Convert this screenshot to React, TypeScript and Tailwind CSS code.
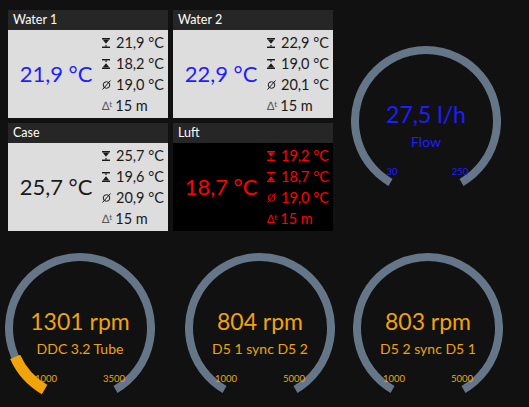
import React from 'react'

const font = { fontFamily: 'Lato, "Noto Sans", sans-serif' }

// kleine Icons für min / max / avg
function Hourglass({ up, color }: { up?: boolean; color: string }) {
  return (
    <svg width="8" height="10" viewBox="0 0 8 10">
      <rect x="0" y="0" width="8" height="1.4" fill={color} />
      <rect x="0" y="8.6" width="8" height="1.4" fill={color} />
      {up ? (
        <>
          <polygon points="2.6,1.4 5.4,1.4 4,3.2" fill={color} />
          <polygon points="0.6,8.6 7.4,8.6 4,4.2" fill={color} />
        </>
      ) : (
        <>
          <polygon points="0.6,1.4 7.4,1.4 4,5.8" fill={color} />
          <polygon points="2.6,8.6 5.4,8.6 4,6.8" fill={color} />
        </>
      )}
    </svg>
  )
}

function Avg({ color }: { color: string }) {
  return (
    <svg width="9" height="10" viewBox="0 0 9 10">
      <circle cx="4.5" cy="5" r="3.3" fill="none" stroke={color} strokeWidth="1" />
      <line x1="0.5" y1="9.5" x2="8.5" y2="0.5" stroke={color} strokeWidth="1" />
    </svg>
  )
}

type TileProps = {
  title: string
  value: string
  max: string
  min: string
  avg: string
  dark?: boolean
  valueClass: string
}

function Tile({ title, value, max, min, avg, dark, valueClass }: TileProps) {
  const c = dark ? '#ff0000' : '#1a1a1a'
  const rowText = dark ? 'text-[#ff0000]' : 'text-[#1a1a1a]'
  return (
    <div className="flex h-[108px] w-[160px] flex-col">
      <div className="flex h-[20px] items-center bg-[#262626] px-[5px] text-[12.5px] text-white">{title}</div>
      <div className={`flex flex-1 ${dark ? 'bg-black' : 'bg-[#dddddd]'}`}>
        <div className={`flex flex-1 items-center justify-center pb-[2px] pl-[2px] text-[22px] ${valueClass}`}>{value}</div>
        <div className={`flex w-[66px] flex-col pt-[2px] text-[14.5px] ${rowText}`}>
          <div className="flex h-[21px] items-center gap-[6px]">
            <Hourglass color={c} />
            <span>{max}</span>
          </div>
          <div className="flex h-[21px] items-center gap-[6px]">
            <Hourglass up color={c} />
            <span>{min}</span>
          </div>
          <div className="flex h-[21px] items-center gap-[5px]">
            <Avg color={c} />
            <span>{avg}</span>
          </div>
          <div className="flex h-[21px] items-center gap-[3px]">
            <span className={`flex items-start leading-none ${dark ? 'text-[#ff0000]' : 'text-[#555]'}`}>
              <span className="text-[12px] font-light">∆</span>
              <span className="text-[8px]">t</span>
            </span>
            <span>15 m</span>
          </div>
        </div>
      </div>
    </div>
  )
}

const R = 71
function pt(deg: number) {
  const a = (deg * Math.PI) / 180
  return [75 + R * Math.cos(a), 75 + R * Math.sin(a)]
}
function arc(from: number, to: number) {
  const [x1, y1] = pt(from)
  const [x2, y2] = pt(to)
  const large = to - from > 180 ? 1 : 0
  return `M ${x1} ${y1} A ${R} ${R} 0 ${large} 1 ${x2} ${y2}`
}

type GaugeProps = {
  value: string
  label: string
  lo: string
  hi: string
  color: string
  fill?: number // 0..1
  className?: string
}

function Gauge({ value, label, lo, hi, color, fill = 0, className }: GaugeProps) {
  return (
    <div className={`relative h-[150px] w-[150px] ${className ?? ''}`}>
      <svg width="150" height="150" viewBox="0 0 150 150" className="absolute left-0 top-0">
        <path d={arc(120, 420)} fill="none" stroke="#647687" strokeWidth="8" />
        {fill > 0 && <path d={arc(120, 120 + 300 * fill)} fill="none" stroke="#f0a30a" strokeWidth="11" />}
      </svg>
      <div className="absolute inset-x-0 top-[53px] text-center text-[23px] leading-[30px]" style={{ color }}>
        {value}
      </div>
      <div className="absolute inset-x-0 top-[86px] text-center text-[14px] leading-[20px]" style={{ color }}>
        {label}
      </div>
      <div className="absolute left-[41px] top-[120px] -translate-x-1/2 text-[9.5px] leading-[12px]" style={{ color }}>
        {lo}
      </div>
      <div className="absolute left-[109px] top-[120px] -translate-x-1/2 text-[9.5px] leading-[12px]" style={{ color }}>
        {hi}
      </div>
    </div>
  )
}

export default function App() {
  return (
    <div className="h-[407px] w-[529px] overflow-hidden bg-[#111111] pt-[10px]" style={font}>
      <div className="flex pl-[8px]">
        <div className="grid grid-cols-[160px_160px] gap-[5px]">
          <Tile title="Water 1" value="21,9 °C" max="21,9 °C" min="18,2 °C" avg="19,0 °C" valueClass="text-[#1e1eff]" />
          <Tile title="Water 2" value="22,9 °C" max="22,9 °C" min="19,0 °C" avg="20,1 °C" valueClass="text-[#1e1eff]" />
          <Tile title="Case" value="25,7 °C" max="25,7 °C" min="19,6 °C" avg="20,9 °C" valueClass="text-[#1a1a1a]" />
          <Tile title="Luft" value="18,7 °C" max="19,2 °C" min="18,7 °C" avg="19,0 °C" dark valueClass="text-[#ff0000]" />
        </div>
        <Gauge className="ml-[18px] mt-[36px]" value="27,5 l/h" label="Flow" lo="30" hi="250" color="#1e1eff" />
      </div>
      <div className="mt-[22px] flex pl-[5px]">
        <Gauge value="1301 rpm" label="DDC 3.2 Tube" lo="1000" hi="3500" color="#f0a30a" fill={0.12} />
        <Gauge className="ml-[30px]" value="804 rpm" label="D5 1 sync D5 2" lo="1000" hi="5000" color="#f0a30a" />
        <Gauge className="ml-[18px]" value="803 rpm" label="D5 2 sync D5 1" lo="1000" hi="5000" color="#f0a30a" />
      </div>
    </div>
  )
}
